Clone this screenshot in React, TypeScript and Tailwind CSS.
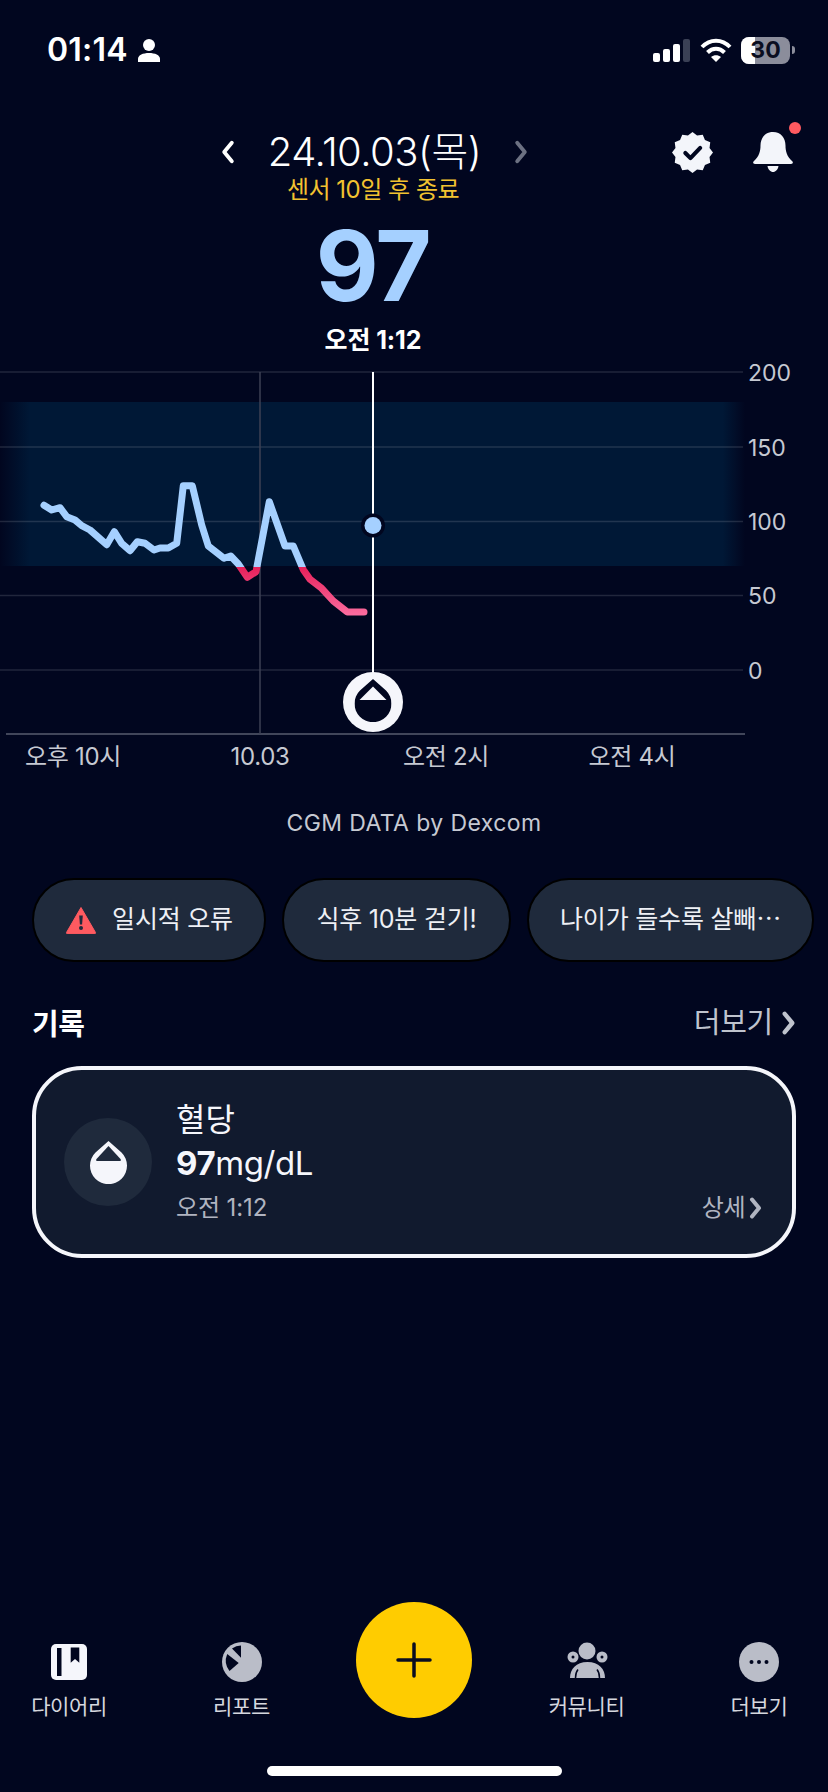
import React from 'react';

const FONT = "[font-family:Inter,'Noto_Sans_CJK_KR','Noto_Sans',sans-serif]";

const glucose = '44,505.3 51.7,510 60,507.7 66.7,516.7 75,520 81.7,525.7 90,530 106.7,544.7 114.3,531.7 121.7,543.3 130,550.7 137.3,541.7 145,543.3 154,550 160,548 168.3,548 176.7,543.3 183.3,485.7 192.3,485.7 201.7,525 208.3,546 224,558.3 230.7,556 238.3,564 247.3,577.3 256,571.7 269.3,501.7 285,546 293.3,546 303.3,569.7 310,579.3 321.7,588.3 333.3,601 347.3,612 364,612';

const yTicks = [
  { label: '200', y: 372 },
  { label: '150', y: 447 },
  { label: '100', y: 521.5 },
  { label: '50', y: 595.5 },
  { label: '0', y: 670 },
];

const xTicks = [
  { label: '오후 10시', x: 73 },
  { label: '10.03', x: 260 },
  { label: '오전 2시', x: 446 },
  { label: '오전 4시', x: 632 },
];

function Chevron({ className = '', strokeWidth = 3.5 }: { className?: string; strokeWidth?: number }) {
  return (
    <svg viewBox="0 0 12 22" fill="none" className={className}>
      <path d="M2.5 2.5 9.5 11l-7 8.5" stroke="currentColor" strokeWidth={strokeWidth} strokeLinecap="round" strokeLinejoin="round" />
    </svg>
  );
}

function Drop({ color, inner, className = '' }: { color: string; inner: string; className?: string }) {
  return (
    <svg viewBox="0 0 37 43" className={className}>
      <path d="M18.5 0 5.5 11.5a18.5 18.5 0 1 0 26 0Z" fill={color} />
      <path d="M18.5 5 6.500 18q-1.200 1.500.3 2h23.400q1.500-.5.3-2Z" fill={inner} />
    </svg>
  );
}

function StatusBar() {
  return (
    <div className="flex h-[100px] items-center justify-between pl-[47px] pr-[33px]">
      <div className="flex items-center gap-[10px]">
        <span className="text-[32px] font-semibold leading-none tracking-[0.2px] text-white">01:14</span>
        <svg viewBox="0 0 22 23" className="h-[23px] w-[22px]" fill="#fff">
          <circle cx="11" cy="6" r="6" />
          <path d="M0 23v-3c0-4 5-6 11-6s11 2 11 6v3Z" />
        </svg>
      </div>
      <div className="flex items-center">
        <div className="flex h-[23px] items-end gap-[3px]">
          <div className="h-[9px] w-[7px] rounded-[2px] bg-white" />
          <div className="h-[13px] w-[7px] rounded-[2px] bg-white" />
          <div className="h-[18px] w-[7px] rounded-[2px] bg-white" />
          <div className="h-[23px] w-[7px] rounded-[2px] bg-[#3a4055]" />
        </div>
        <svg viewBox="0 0 32 24" className="ml-[10px] h-[24px] w-[32px]" fill="none" stroke="#fff" strokeWidth="4">
          <path d="M2 9c8-8.5 20-8.5 28 0" />
          <path d="M7.5 14.5c5-5 12-5 17 0" />
          <path d="M16 24l-5-5c3-2.500 7-2.500 10 0Z" fill="#fff" stroke="none" />
        </svg>
        <div className="relative ml-[9px] flex h-[27px] w-[49px] items-center justify-center overflow-hidden rounded-[8px] bg-[#8b8d9b]">
          <div className="absolute inset-y-0 left-0 w-[14px] bg-white" />
          <span className="relative text-[23px] font-bold leading-none text-[#0a0d20]">30</span>
        </div>
        <div className="ml-[2px] h-[8px] w-[3px] rounded-r-[3px] bg-[#8b8d9b]" />
      </div>
    </div>
  );
}

function Badge() {
  const pts: string[] = [];
  for (let i = 0; i < 24; i++) {
    const r = i % 2 === 0 ? 20 : 17.2;
    const a = (Math.PI * 2 * i) / 24;
    pts.push(`${(20 + r * Math.sin(a)).toFixed(2)},${(20 - r * Math.cos(a)).toFixed(2)}`);
  }
  return (
    <svg viewBox="0 0 40 40" className="h-[41px] w-[41px]">
      <polygon points={pts.join(' ')} fill="#f3f5fa" strokeLinejoin="round" />
      <path d="M13 20.500 18 25.500 27.500 15.500" fill="none" stroke="#01061f" strokeWidth="4" strokeLinecap="round" strokeLinejoin="round" />
    </svg>
  );
}

function Bell() {
  return (
    <div className="relative h-[40px] w-[40px]">
      <svg viewBox="0 0 40 40" className="h-[40px] w-[40px]" fill="#f3f5fa">
        <path d="M20 0c-8 0-12.500 6-12.500 13.500 0 6-1.500 11-6.500 15.500-1.500 1.300-1 3 1 3h36c2 0 2.500-1.700 1-3-5-4.500-6.500-9.500-6.500-15.500C32.500 6 28 0 20 0Z" />
        <path d="M14.500 34h11c-.5 3.500-3 6-5.500 6s-5-2.500-5.500-6Z" />
      </svg>
      <div className="absolute left-[36px] top-[-10px] h-[12px] w-[12px] rounded-full bg-[#ff5a60]" />
    </div>
  );
}

function Header() {
  return (
    <div className="mt-[26px] grid grid-cols-[746px_1fr]">
      <div className="flex flex-col items-center">
        <div className="flex h-[52px] items-center pl-[3px]">
          <Chevron className="h-[24px] w-[14px] rotate-180 text-white" />
          <span className="mx-[33px] text-[40px] font-light leading-none tracking-[-0.5px] text-white">24.10.03(목)</span>
          <Chevron className="h-[24px] w-[14px] text-[#6c7182]" />
        </div>
        <div className="h-[24px] text-[24px] leading-[24px] tracking-[-0.5px] text-[#f2c230]">센서 10일 후 종료</div>
        <div className="mt-[16px] h-[96px] text-[97px] font-bold leading-[96px] tracking-[-1.5px] text-[#a5d0ff]">97</div>
        <div className="mt-[11px] h-[30px] text-[25px] font-bold leading-[30px] tracking-[-0.1px] text-white">오전 1:12</div>
      </div>
      <div className="flex items-start gap-[40px] pt-[6px]">
        <div className="-ml-[74px]">
          <Badge />
        </div>
        <Bell />
      </div>
    </div>
  );
}

function Chart() {
  return (
    <svg viewBox="0 360 828 420" className="mt-[5px] h-[420px] w-[828px] shrink-0">
      <defs>
        <linearGradient id="band" x1="0" x2="745" y1="0" y2="0" gradientUnits="userSpaceOnUse">
          <stop offset="0" stopColor="#001836" stopOpacity="0" />
          <stop offset="0.04" stopColor="#001836" />
          <stop offset="0.97" stopColor="#001836" />
          <stop offset="1" stopColor="#001836" stopOpacity="0" />
        </linearGradient>
        <linearGradient id="low" x1="0" x2="0" y1="567" y2="614" gradientUnits="userSpaceOnUse">
          <stop offset="0" stopColor="#e6205a" />
          <stop offset="1" stopColor="#fb6b9e" />
        </linearGradient>
        <clipPath id="inRange">
          <rect x="0" y="360" width="828" height="207" />
        </clipPath>
        <clipPath id="belowRange">
          <rect x="0" y="567" width="828" height="213" />
        </clipPath>
      </defs>
      <rect x="0" y="402" width="745" height="164" fill="url(#band)" />
      {yTicks.map((t) => (
        <line key={t.label} x1="0" x2="743" y1={t.y} y2={t.y} stroke="#ffffff" strokeOpacity="0.13" strokeWidth="1.5" />
      ))}
      <line x1="6" x2="745" y1="734" y2="734" stroke="#41465a" strokeWidth="2" />
      <line x1="260" x2="260" y1="372" y2="734" stroke="#3c4154" strokeWidth="1.500" />
      <polyline points={glucose} clipPath="url(#inRange)" fill="none" stroke="#a5d0ff" strokeWidth="7" strokeLinecap="round" strokeLinejoin="round" />
      <polyline points={glucose} clipPath="url(#belowRange)" fill="none" stroke="url(#low)" strokeWidth="7" strokeLinecap="round" strokeLinejoin="round" />
      <line x1="373" x2="373" y1="372" y2="680" stroke="#ffffff" strokeWidth="2" />
      <circle cx="373" cy="525.500" r="12" fill="#01061f" />
      <circle cx="373" cy="525.500" r="8.500" fill="#a5d0ff" />
      <circle cx="373" cy="702" r="30" fill="#f5f6fb" />
      <svg x="354.500" y="679" width="37" height="43" viewBox="0 0 37 43">
        <path d="M18.500 0 5.500 11.500a18.500 18.500 0 1 0 26 0Z" fill="#01061f" />
        <path d="M18.500 7.500 5 21h27Z" fill="#f5f6fb" />
      </svg>
      {yTicks.map((t) => (
        <text key={t.label} x="748" y={t.y + 8.500} fontSize="23" fill="#c6c9d2">{t.label}</text>
      ))}
      {xTicks.map((t) => (
        <text key={t.label} x={t.x} y="765" fontSize="24" textAnchor="middle" letterSpacing="-0.3" fill="#c6c9d2">{t.label}</text>
      ))}
    </svg>
  );
}

function Chip({ children, className = '' }: { children: React.ReactNode; className?: string }) {
  return (
    <div className={`flex h-[84px] shrink-0 items-center justify-center rounded-[42px] border-[2px] border-[#000000] bg-[#1f2a3c] text-[25px] tracking-[-0.2px] text-[#eef0f5] ${className}`}>
      {children}
    </div>
  );
}

function Chips() {
  return (
    <div className="mt-[39px] flex gap-[16px] pl-[32px]">
      <Chip className="w-[234px] gap-[15px]">
        <svg viewBox="0 0 32 28" className="h-[28px] w-[32px]">
          <path d="M16 1.500 30.500 26.500a.8.8 0 0 1-.7 1.200H2.200a.8.8 0 0 1-.7-1.200Z" fill="#ff5a60" stroke="#ff5a60" strokeLinejoin="round" />
          <path d="M14.200 9.500h3.600l-.7 9h-2.200Z" fill="#1f2a3c" />
          <circle cx="16" cy="22" r="2" fill="#1f2a3c" />
        </svg>
        <span>일시적 오류</span>
      </Chip>
      <Chip className="w-[229px]">식후 10분 걷기!</Chip>
      <Chip className="w-[287px]">나이가 들수록 살빼⋯</Chip>
    </div>
  );
}

function Records() {
  return (
    <>
      <div className="mt-[41px] flex h-[40px] items-center justify-between pl-[32px] pr-[33px]">
        <span className="pt-[3px] text-[29px] font-bold tracking-[-0.5px] text-white">기록</span>
        <div className="flex items-center gap-[9px] text-[#bfc3cd]">
          <span className="text-[29px] tracking-[-0.3px]">더보기</span>
          <Chevron className="h-[24px] w-[13px]" strokeWidth={4} />
        </div>
      </div>
      <div className="mx-[32px] mt-[23px] flex h-[192px] items-center rounded-[50px] border-[4px] border-[#f5f6fb] bg-[#111a2e] pl-[28px] pr-[30px]">
        <div className="flex h-[88px] w-[88px] shrink-0 items-center justify-center rounded-full bg-[#1f2a3c]">
          <Drop color="#f5f6fb" inner="#1f2a3c" className="h-[43px] w-[37px]" />
        </div>
        <div className="ml-[24px] flex flex-1 flex-col">
          <span className="-mt-[1px] text-[32px] leading-[40px] text-[#f5f6fb]">혈당</span>
          <span className="mt-[2px] text-[33px] leading-[42px] tracking-[-0.4px] text-[#f5f6fb]">
            <b className="font-bold">97</b>mg/dL
          </span>
          <div className="mt-[8px] flex h-[32px] items-center justify-between text-[#b0b4c0]">
            <span className="text-[24px] tracking-[-0.1px]">오전 1:12</span>
            <div className="flex items-center gap-[4px]">
              <span className="text-[24px] tracking-[-0.5px]">상세</span>
              <Chevron className="h-[22px] w-[13px]" strokeWidth={4} />
            </div>
          </div>
        </div>
      </div>
    </>
  );
}

function NavIcon({ name }: { name: string }) {
  if (name === 'diary') {
    return (
      <svg viewBox="0 0 36 36" className="h-[36px] w-[36px]">
        <rect width="36" height="36" rx="5" fill="#f5f6fb" />
        <rect x="6" y="4" width="4.500" height="28" fill="#01061f" />
        <path d="M19.700 3.500h8.600v15.200L24 15l-4.300 3.700Z" fill="#01061f" />
      </svg>
    );
  }
  if (name === 'report') {
    return (
      <svg viewBox="0 0 40 40" className="h-[40px] w-[40px]">
        <circle cx="20" cy="20" r="20" fill="#babdc8" />
        <path d="M10 6.500A17 17 0 0 1 19 3.500V15.700Z" fill="#01061f" />
        <path d="M5.200 12 16.700 21 7.500 29A17 17 0 0 1 5.200 12Z" fill="#01061f" />
      </svg>
    );
  }
  if (name === 'community') {
    return (
      <svg viewBox="0 0 50 50" className="h-[40px] w-[40px] scale-[1.25]" fill="#babdc8">
        <circle cx="25" cy="14" r="8.500" />
        <circle cx="11" cy="20" r="5.500" />
        <circle cx="40" cy="20" r="5.500" />
        <circle cx="11" cy="20" r="1.500" fill="#01061f" />
        <circle cx="40" cy="20" r="1.500" fill="#01061f" />
        <path d="M8 41c0-9 6-16 17.500-16S43 32 43 41Z" />
        <path d="M13.500 41c0-4 .8-6.500 2.500-8.500M37.500 41c0-4-.8-6.500-2.500-8.500" fill="none" stroke="#01061f" strokeWidth="1.500" />
      </svg>
    );
  }
  return (
    <svg viewBox="0 0 40 40" className="h-[40px] w-[40px]">
      <circle cx="20" cy="20" r="20" fill="#babdc8" />
      <circle cx="12.500" cy="20" r="2" fill="#01061f" />
      <circle cx="20" cy="20" r="2" fill="#01061f" />
      <circle cx="27.500" cy="20" r="2" fill="#01061f" />
    </svg>
  );
}

function NavItem({ name, label }: { name: string; label: string }) {
  return (
    <div className="flex w-[100px] flex-col items-center pt-[40px]">
      <div className="flex h-[40px] items-center justify-center">
        <NavIcon name={name} />
      </div>
      <span className="mt-[10px] text-[21px] leading-[30px] tracking-[-0.4px] text-[#d5d7de]">{label}</span>
    </div>
  );
}

function BottomNav() {
  return (
    <div className="mt-auto flex h-[190px] flex-col">
      <div className="flex items-start justify-between px-[19px]">
        <NavItem name="diary" label="다이어리" />
        <NavItem name="report" label="리포트" />
        <div className="flex w-[100px] justify-center">
          <div className="flex h-[116px] w-[116px] shrink-0 items-center justify-center rounded-full bg-[#ffcc00]">
            <svg viewBox="0 0 36 36" className="h-[36px] w-[36px]" stroke="#0a0d20" strokeWidth="3.500" strokeLinecap="round">
              <path d="M18 2v32M2 18h32" />
            </svg>
          </div>
        </div>
        <NavItem name="community" label="커뮤니티" />
        <NavItem name="more" label="더보기" />
      </div>
      <div className="mx-auto mt-[44px] h-[10px] w-[295px] rounded-full bg-white" />
    </div>
  );
}

export default function App() {
  return (
    <div className={`flex h-[1792px] w-[828px] flex-col overflow-hidden bg-[#01061f] ${FONT}`}>
      <StatusBar />
      <Header />
      <Chart />
      <div className="mt-[27px] h-[32px] text-center text-[23px] leading-[32px] tracking-[0.4px] text-[#c6c9d2]">CGM DATA by Dexcom</div>
      <Chips />
      <Records />
      <BottomNav />
    </div>
  );
}
